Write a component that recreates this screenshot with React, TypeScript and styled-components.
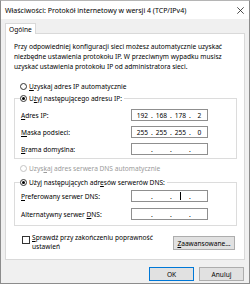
import React from "react";
import styled, { createGlobalStyle } from "styled-components";

const GlobalStyle = createGlobalStyle`
  html, body {
    margin: 0;
    padding: 0;
    background: #f0f0f0;
  }
  body {
    font-family: "Noto Sans", "Open Sans", sans-serif;
    font-size: 6.6px;
    color: #000;
  }
`;

const Window = styled.div`
  box-sizing: border-box;
  width: 250px;
  height: 284px;
  display: flex;
  flex-direction: column;
  background: #f0f0f0;
  border: 1px solid #8c8c8c;
  border-top-color: #b5b5b5;
`;

const TitleBar = styled.div`
  flex: none;
  height: 18px;
  display: flex;
  align-items: center;
  justify-content: space-between;
  background: #fff;
  padding: 0 5px 0 4px;
`;

const Title = styled.div`
  font-size: 7px;
  white-space: nowrap;
`;

const Body = styled.div`
  flex: 1;
  display: flex;
  flex-direction: column;
  padding: 4px 4px 0 4px;
`;

const TabStrip = styled.div`
  display: flex;
  flex: none;
`;

const Tab = styled.div`
  box-sizing: border-box;
  height: 11px;
  display: flex;
  align-items: center;
  padding: 0 3px;
  background: #fff;
  border: 1px solid #d9d9d9;
  border-bottom: none;
  margin-bottom: -1px;
  position: relative;
  z-index: 1;
`;

const Panel = styled.div`
  flex: 1;
  display: flex;
  flex-direction: column;
  background: #fff;
  border: 1px solid #d9d9d9;
  padding: 8px 7px 0 8px;
`;

const Paragraph = styled.p`
  margin: 0;
  line-height: 10px;
  white-space: nowrap;
`;

const RadioRow = styled.div<{ $disabled?: boolean; $top?: number }>`
  display: flex;
  align-items: center;
  height: 9px;
  padding-left: 6px;
  margin-top: ${(p) => p.$top ?? 0}px;
  color: ${(p) => (p.$disabled ? "#9a9a9a" : "#000")};
  white-space: nowrap;
`;

const RadioCircle = styled.span<{ $checked?: boolean; $disabled?: boolean }>`
  box-sizing: border-box;
  width: 7px;
  height: 7px;
  border-radius: 50%;
  border: 1px solid ${(p) => (p.$disabled ? "#c4c4c4" : "#333")};
  margin-right: 2px;
  display: flex;
  align-items: center;
  justify-content: center;
  flex: none;
  &::after {
    content: "";
    display: ${(p) => (p.$checked ? "block" : "none")};
    width: 3px;
    height: 3px;
    border-radius: 50%;
    background: #000;
  }
`;

const Group = styled.fieldset<{ $top: number; $bottom: number }>`
  margin: ${(p) => p.$top}px 0 0 0;
  padding: 0 6px ${(p) => p.$bottom}px 6px;
  border: 1px solid #dcdcdc;
  min-width: 0;
`;

const Legend = styled.legend`
  padding: 0 2px 0 0;
  margin-left: -1px;
`;

const LegendRow = styled(RadioRow)`
  padding-left: 0;
`;

const Fields = styled.div<{ $top: number; $gap: number }>`
  display: grid;
  grid-template-columns: 110px 77px;
  row-gap: ${(p) => p.$gap}px;
  align-items: center;
  margin-top: ${(p) => p.$top}px;
`;

const Label = styled.div`
  white-space: nowrap;
`;

const Key = styled.span`
  text-decoration: underline;
  text-underline-offset: 1px;
`;

const IpBox = styled.div`
  box-sizing: border-box;
  height: 12px;
  display: flex;
  align-items: center;
  padding: 0 1px 0 3px;
  border: 1px solid #8f8f8f;
  background: #fff;
`;

const Octet = styled.span`
  width: 15px;
  flex: none;
  display: flex;
  justify-content: center;
  align-items: center;
`;

const Dot = styled.span`
  width: 4px;
  flex: none;
  text-align: center;
`;

const Caret = styled.span`
  display: block;
  width: 1px;
  height: 8px;
  background: #000;
`;

const BottomRow = styled.div`
  display: flex;
  justify-content: space-between;
  align-items: flex-start;
  margin-top: 7px;
  padding-left: 8px;
  padding-right: 2px;
`;

const CheckRow = styled.div`
  display: flex;
  align-items: flex-start;
`;

const CheckBox = styled.span`
  box-sizing: border-box;
  width: 8px;
  height: 8px;
  border: 1px solid #333;
  margin-top: 3px;
  margin-right: 2px;
  flex: none;
`;

const CheckText = styled.div`
  line-height: 9px;
  white-space: nowrap;
`;

const Button = styled.button<{ $default?: boolean; $width: number; $top?: number }>`
  box-sizing: border-box;
  width: ${(p) => p.$width}px;
  height: 14px;
  margin-top: ${(p) => p.$top ?? 0}px;
  padding: 0;
  font: inherit;
  color: #000;
  background: #e1e1e1;
  border: 1px solid ${(p) => (p.$default ? "#0078d7" : "#adadad")};
  display: flex;
  align-items: center;
  justify-content: center;
  white-space: nowrap;
`;

const Footer = styled.div`
  flex: none;
  height: 23px;
  box-sizing: border-box;
  display: flex;
  justify-content: flex-end;
  align-items: flex-start;
  gap: 5px;
  padding: 7px 1px 0 0;
`;

const CloseIcon = () => (
  <svg width="7" height="7" viewBox="0 0 7 7">
    <path d="M0.3 0.3 L6.7 6.7 M6.7 0.3 L0.3 6.7" stroke="#222" strokeWidth="0.8" fill="none" />
  </svg>
);

const IpField = ({ values, caretAt }: { values: string[]; caretAt?: number }) => (
  <IpBox>
    {values.map((v, i) => (
      <React.Fragment key={i}>
        {i > 0 && <Dot>.</Dot>}
        <Octet>{caretAt === i ? <Caret /> : v}</Octet>
      </React.Fragment>
    ))}
  </IpBox>
);

export default function App() {
  return (
    <>
      <GlobalStyle />
      <Window>
        <TitleBar>
          <Title>Właściwości: Protokół internetowy w wersji 4 (TCP/IPv4)</Title>
          <CloseIcon />
        </TitleBar>
        <Body>
          <TabStrip>
            <Tab>Ogólne</Tab>
          </TabStrip>
          <Panel>
            <Paragraph>
              Przy odpowiedniej konfiguracji sieci możesz automatycznie uzyskać
              <br />
              niezbędne ustawienia protokołu IP. W przeciwnym wypadku musisz
              <br />
              uzyskać ustawienia protokołu IP od administratora sieci.
            </Paragraph>

            <RadioRow $top={10}>
              <RadioCircle />
              <span>
                <Key>U</Key>zyskaj adres IP automatycznie
              </span>
            </RadioRow>

            <Group $top={3} $bottom={3}>
              <Legend>
                <LegendRow>
                  <RadioCircle $checked />
                  <span>
                    U<Key>ż</Key>yj następującego adresu IP:
                  </span>
                </LegendRow>
              </Legend>
              <Fields $top={6} $gap={5}>
                <Label>
                  <Key>A</Key>dres IP:
                </Label>
                <IpField values={["192", "168", "178", "2"]} />
                <Label>
                  <Key>M</Key>aska podsieci:
                </Label>
                <IpField values={["255", "255", "255", "0"]} />
                <Label>
                  <Key>B</Key>rama domyślna:
                </Label>
                <IpField values={["", "", "", ""]} />
              </Fields>
            </Group>

            <RadioRow $top={5} $disabled>
              <RadioCircle $disabled />
              <span>
                Uzys<Key>k</Key>aj adres serwera DNS automatycznie
              </span>
            </RadioRow>

            <Group $top={5} $bottom={5}>
              <Legend>
                <LegendRow>
                  <RadioCircle $checked />
                  <span>
                    Użyj następujących adr<Key>e</Key>sów serwerów DNS:
                  </span>
                </LegendRow>
              </Legend>
              <Fields $top={3} $gap={6}>
                <Label>
                  <Key>P</Key>referowany serwer DNS:
                </Label>
                <IpField values={["", "", "", ""]} caretAt={2} />
                <Label>
                  Alternatywny serwer <Key>D</Key>NS:
                </Label>
                <IpField values={["", "", "", ""]} />
              </Fields>
            </Group>

            <BottomRow>
              <CheckRow>
                <CheckBox />
                <CheckText>
                  <Key>S</Key>prawdź przy zakończeniu poprawność
                  <br />
                  ustawień
                </CheckText>
              </CheckRow>
              <Button $width={62} $top={3}>
                <span>
                  <Key>Z</Key>aawansowane...
                </span>
              </Button>
            </BottomRow>
          </Panel>
          <Footer>
            <Button $default $width={45}>
              OK
            </Button>
            <Button $width={45}>Anuluj</Button>
          </Footer>
        </Body>
      </Window>
    </>
  );
}
